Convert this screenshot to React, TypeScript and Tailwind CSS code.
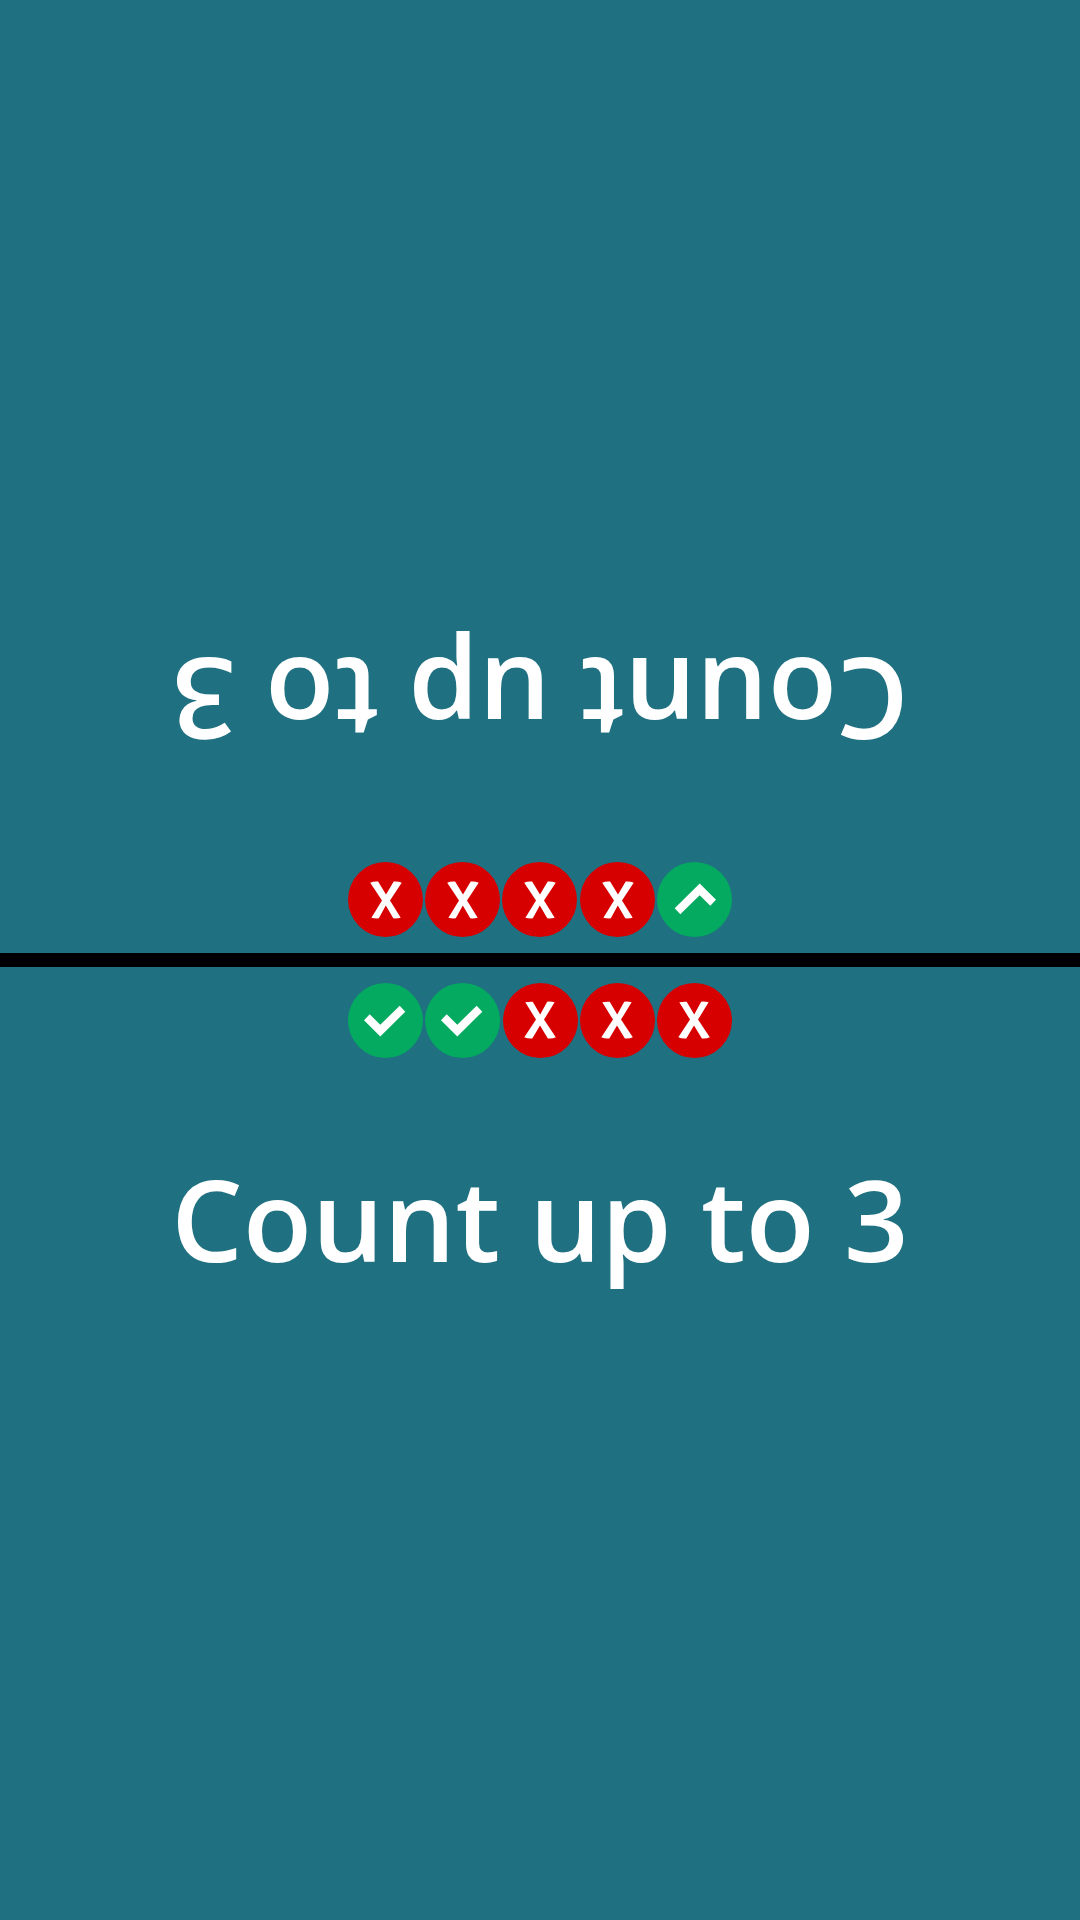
type Mark = "check" | "cross";

function MarkIcon({ kind }: { kind: Mark }) {
  if (kind === "check") {
    return (
      <svg viewBox="0 0 75 75" className="size-[75px] shrink-0" role="img" aria-label="Correct">
        <circle cx="37.5" cy="37.5" r="37.5" fill="#03aa60" />
        <path d="M16 37.3 21.7 31.3 32.3 41.7 51.7 22.7 57.3 28.7 32.3 53.5Z" fill="#fff" />
      </svg>
    );
  }
  return (
    <svg viewBox="0 0 75 75" className="size-[75px] shrink-0" role="img" aria-label="Wrong">
      <circle cx="37.5" cy="37.5" r="37.5" fill="#d70000" />
      <path
        d="M22.3 19.3 Q25.7 18.4 29.7 18.7 L37.2 31.4 44.2 18.7 Q48 18.3 51.6 19.3 L41 36.6 52.8 54.3 Q49.5 56 44.9 55.5 L37 42.6 29.3 55.5 Q25 56 21.3 54.3 L33 36.6Z"
        fill="#fff"
      />
    </svg>
  );
}

function PlayerHalf({ marks, prompt, flipped }: { marks: Mark[]; prompt: string; flipped?: boolean }) {
  return (
    <section className={`flex flex-1 flex-col items-center pt-4 ${flipped ? "rotate-180" : ""}`}>
      <div className="flex w-96 justify-between">
        {marks.map((kind, i) => (
          <MarkIcon key={i} kind={kind} />
        ))}
      </div>
      <h1 className="mt-[94px] text-center text-[113px] leading-[132px] font-semibold whitespace-nowrap">{prompt}</h1>
    </section>
  );
}

export default function App() {
  return (
    <main className="flex min-h-screen flex-col overflow-hidden bg-[#1f7080] font-['Open_Sans','Noto_Sans',sans-serif] text-white">
      <PlayerHalf flipped prompt="Count up to 3" marks={["check", "cross", "cross", "cross", "cross"]} />
      <hr className="h-[14px] border-0 bg-black" />
      <PlayerHalf prompt="Count up to 3" marks={["check", "check", "cross", "cross", "cross"]} />
    </main>
  );
}
